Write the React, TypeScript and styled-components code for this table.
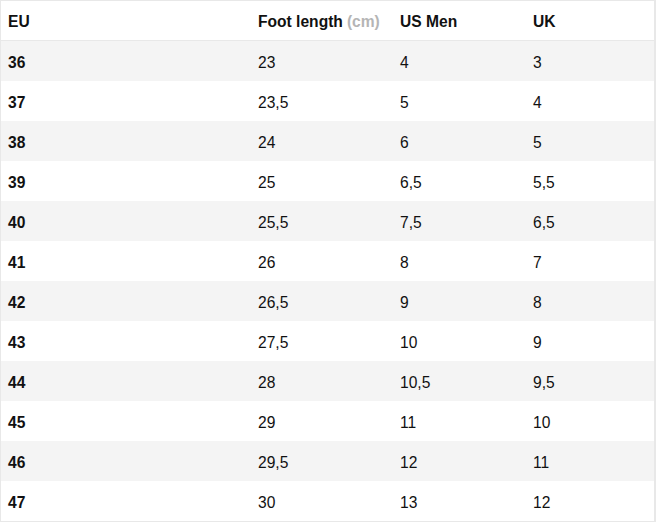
import React from "react";
import styled, { createGlobalStyle } from "styled-components";

const Global = createGlobalStyle`
  html, body { margin: 0; padding: 0; background: #ffffff; }
  body { font-family: "Liberation Sans", Arial, Helvetica, sans-serif; color: #111111; }
`;

const Table = styled.div`
  width: 656px;
  box-sizing: border-box;
  border: 1px solid #e8e8e8;
  border-right-width: 2px;
`;

const Row = styled.div<{ $shaded?: boolean; $head?: boolean }>`
  display: grid;
  grid-template-columns: 250px 142px 133px 1fr;
  height: ${(p) => (p.$head ? "39px" : "40px")};
  background: ${(p) => (p.$shaded ? "#f4f4f4" : "#ffffff")};
  border-bottom: ${(p) => (p.$head ? "1px solid #e8e8e8" : "none")};
`;

const Cell = styled.div<{ $strong?: boolean }>`
  display: flex;
  align-items: center;
  padding: 3px 0 0 7px;
  font-size: 15.6px;
  font-weight: ${(p) => (p.$strong ? 700 : 400)};
  color: #111111;
  white-space: nowrap;
`;

const Unit = styled.span`
  color: #b5b5b5;
  margin-left: 4px;
`;

const rows: [string, string, string, string][] = [
  ["36", "23", "4", "3"],
  ["37", "23,5", "5", "4"],
  ["38", "24", "6", "5"],
  ["39", "25", "6,5", "5,5"],
  ["40", "25,5", "7,5", "6,5"],
  ["41", "26", "8", "7"],
  ["42", "26,5", "9", "8"],
  ["43", "27,5", "10", "9"],
  ["44", "28", "10,5", "9,5"],
  ["45", "29", "11", "10"],
  ["46", "29,5", "12", "11"],
  ["47", "30", "13", "12"],
];

export default function App() {
  return (
    <>
      <Global />
      <Table>
        <Row $head>
          <Cell $strong>EU</Cell>
          <Cell $strong>
            Foot length<Unit>(cm)</Unit>
          </Cell>
          <Cell $strong>US Men</Cell>
          <Cell $strong>UK</Cell>
        </Row>
        {rows.map((r, i) => (
          <Row key={r[0]} $shaded={i % 2 === 0}>
            <Cell $strong>{r[0]}</Cell>
            <Cell>{r[1]}</Cell>
            <Cell>{r[2]}</Cell>
            <Cell>{r[3]}</Cell>
          </Row>
        ))}
      </Table>
    </>
  );
}
